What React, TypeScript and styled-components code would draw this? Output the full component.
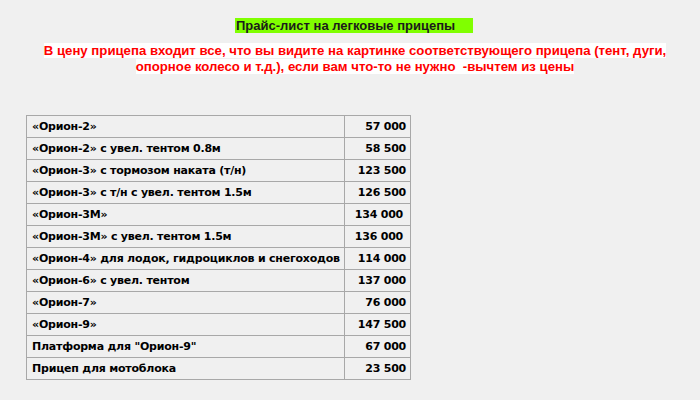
import React from "react";
import styled, { createGlobalStyle } from "styled-components";

const Global = createGlobalStyle`
  html, body { margin: 0; padding: 0; background: #f0f0f0; }
  body { width: 700px; height: 400px; overflow: hidden; }
`;

const Page = styled.div`
  width: 700px;
  padding-top: 16px;
  font-family: "Liberation Sans", Arial, sans-serif;
`;

const TitleLine = styled.div`
  text-align: center;
  height: 15px;
  padding-left: 8px;
`;

const Title = styled.span`
  display: inline-block;
  background: #80ff00;
  color: #1a1a1a;
  font-weight: bold;
  font-size: 13px;
  line-height: 15px;
  padding: 0 3px 0 1px;
  width: 234px;
  text-align: left;
`;

const Notice = styled.div`
  margin-top: 12px;
  text-align: center;
  color: #ff0000;
  font-weight: bold;
  font-size: 13.2px;
  line-height: 16px;
  padding: 0 30px 0 40px;
`;

const NoticeText = styled.span`
  background: #ffffff;
`;

const Table = styled.table`
  margin: 40px 0 0 26px;
  border-collapse: collapse;
  table-layout: fixed;
  width: 385px;
  font-family: "DejaVu Sans", Verdana, sans-serif;
  font-weight: bold;
  font-size: 11px;
  letter-spacing: -0.22px;
  color: #000;
`;

const Row = styled.tr`
  height: 22px;
`;

const Name = styled.td`
  width: 312px;
  border: 1px solid #a8a8a8;
  padding: 0 0 0 5px;
  white-space: nowrap;
  overflow: hidden;
`;

const Price = styled.td<{ $pr: number }>`
  border: 1px solid #a8a8a8;
  padding: 0 ${(p) => p.$pr}px 0 0;
  text-align: right;
  white-space: nowrap;
`;

const rows: [string, string, number][] = [
  ["«Орион-2»", "57 000", 4],
  ["«Орион-2» с увел. тентом 0.8м", "58 500", 4],
  ["«Орион-3» с тормозом наката (т/н)", "123 500", 4],
  ["«Орион-3» с т/н с увел. тентом 1.5м", "126 500", 4],
  ["«Орион-3М»", "134 000", 7],
  ["«Орион-3М» с увел. тентом 1.5м", "136 000", 7],
  ["«Орион-4» для лодок, гидроциклов и снегоходов", "114 000", 4],
  ["«Орион-6» с увел. тентом", "137 000", 4],
  ["«Орион-7»", "76 000", 4],
  ["«Орион-9»", "147 500", 4],
  ['Платформа для "Орион-9"', "67 000", 4],
  ["Прицеп для мотоблока", "23 500", 4],
];

export default function App() {
  return (
    <>
      <Global />
      <Page>
        <TitleLine>
          <Title>Прайс-лист на легковые прицепы</Title>
        </TitleLine>
        <Notice>
          <NoticeText>
            В цену прицепа входит все, что вы видите на картинке соответствующего прицепа (тент, дуги,
            опорное колесо и т.д.), если вам что-то не нужно &nbsp;-вычтем из цены
          </NoticeText>
        </Notice>
        <Table>
          <tbody>
            {rows.map(([n, p, pr]) => (
              <Row key={n}>
                <Name>{n}</Name>
                <Price $pr={pr}>{p}</Price>
              </Row>
            ))}
          </tbody>
        </Table>
      </Page>
    </>
  );
}
